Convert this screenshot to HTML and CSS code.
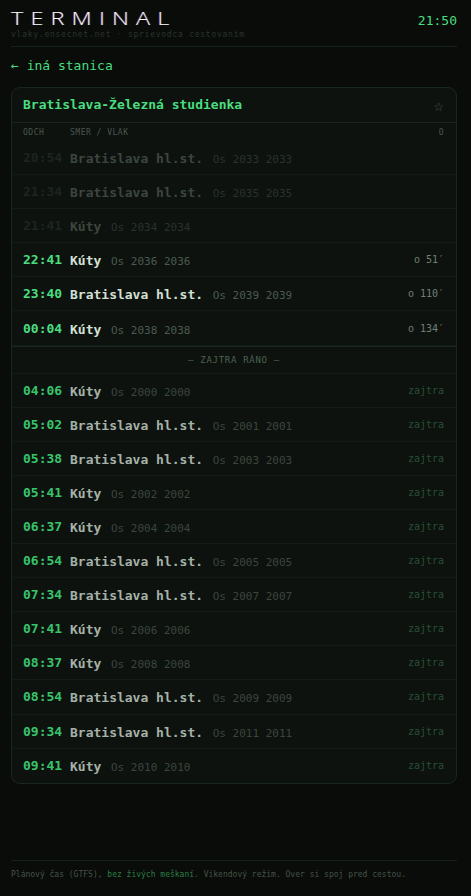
FILE: index.html
```html
<!DOCTYPE html>
<html lang="sk">
<head>
<meta charset="utf-8">
<title>Terminal – Bratislava-Železná studienka</title>
<link rel="stylesheet" href="styles.css">
</head>
<body>
<div class="page">
  <header class="top">
    <div class="brand">
      <div class="logo">TERMINAL</div>
      <div class="tag">vlaky.ensecnet.net · sprievodca cestovaním</div>
    </div>
    <div class="clock">21:50</div>
  </header>

  <a class="back" href="#">← iná stanica</a>

  <section class="board">
    <div class="board-head">
      <h1 class="station">Bratislava-Železná studienka</h1>
      <span class="star">☆</span>
    </div>
    <div class="cols">
      <span>ODCH</span><span>SMER / VLAK</span><span class="c-right">O</span>
    </div>

    <div class="row past"><span class="time">20:54</span><span class="dir"><b class="dest">Bratislava hl.st.</b> <span class="train">Os 2033 2033</span></span><span class="eta"></span></div>
    <div class="row past"><span class="time">21:34</span><span class="dir"><b class="dest">Bratislava hl.st.</b> <span class="train">Os 2035 2035</span></span><span class="eta"></span></div>
    <div class="row past"><span class="time">21:41</span><span class="dir"><b class="dest">Kúty</b> <span class="train">Os 2034 2034</span></span><span class="eta"></span></div>
    <div class="row now"><span class="time">22:41</span><span class="dir"><b class="dest">Kúty</b> <span class="train">Os 2036 2036</span></span><span class="eta">o 51′</span></div>
    <div class="row now"><span class="time">23:40</span><span class="dir"><b class="dest">Bratislava hl.st.</b> <span class="train">Os 2039 2039</span></span><span class="eta">o 110′</span></div>
    <div class="row now"><span class="time">00:04</span><span class="dir"><b class="dest">Kúty</b> <span class="train">Os 2038 2038</span></span><span class="eta">o 134′</span></div>

    <div class="sep">— ZAJTRA RÁNO —</div>

    <div class="row next"><span class="time">04:06</span><span class="dir"><b class="dest">Kúty</b> <span class="train">Os 2000 2000</span></span><span class="eta">zajtra</span></div>
    <div class="row next"><span class="time">05:02</span><span class="dir"><b class="dest">Bratislava hl.st.</b> <span class="train">Os 2001 2001</span></span><span class="eta">zajtra</span></div>
    <div class="row next"><span class="time">05:38</span><span class="dir"><b class="dest">Bratislava hl.st.</b> <span class="train">Os 2003 2003</span></span><span class="eta">zajtra</span></div>
    <div class="row next"><span class="time">05:41</span><span class="dir"><b class="dest">Kúty</b> <span class="train">Os 2002 2002</span></span><span class="eta">zajtra</span></div>
    <div class="row next"><span class="time">06:37</span><span class="dir"><b class="dest">Kúty</b> <span class="train">Os 2004 2004</span></span><span class="eta">zajtra</span></div>
    <div class="row next"><span class="time">06:54</span><span class="dir"><b class="dest">Bratislava hl.st.</b> <span class="train">Os 2005 2005</span></span><span class="eta">zajtra</span></div>
    <div class="row next"><span class="time">07:34</span><span class="dir"><b class="dest">Bratislava hl.st.</b> <span class="train">Os 2007 2007</span></span><span class="eta">zajtra</span></div>
    <div class="row next"><span class="time">07:41</span><span class="dir"><b class="dest">Kúty</b> <span class="train">Os 2006 2006</span></span><span class="eta">zajtra</span></div>
    <div class="row next"><span class="time">08:37</span><span class="dir"><b class="dest">Kúty</b> <span class="train">Os 2008 2008</span></span><span class="eta">zajtra</span></div>
    <div class="row next"><span class="time">08:54</span><span class="dir"><b class="dest">Bratislava hl.st.</b> <span class="train">Os 2009 2009</span></span><span class="eta">zajtra</span></div>
    <div class="row next"><span class="time">09:34</span><span class="dir"><b class="dest">Bratislava hl.st.</b> <span class="train">Os 2011 2011</span></span><span class="eta">zajtra</span></div>
    <div class="row next"><span class="time">09:41</span><span class="dir"><b class="dest">Kúty</b> <span class="train">Os 2010 2010</span></span><span class="eta">zajtra</span></div>
  </section>

  <footer class="foot">
    Plánový čas (GTFS), <span class="hl">bez živých meškaní</span>. Víkendový režim. Over si spoj pred cestou.
  </footer>
</div>
</body>
</html>
```

FILE: styles.css
```css
* { box-sizing: border-box; }

html, body {
  margin: 0;
  background: #090c09;
}

body {
  font-family: "DejaVu Sans Mono", "Liberation Mono", monospace;
  color: #c9d6cc;
}

.page {
  min-height: 100vh;
  display: flex;
  flex-direction: column;
  padding: 0 14px 0 11px;
}

/* header */
.top {
  display: flex;
  justify-content: space-between;
  align-items: flex-start;
  padding: 8px 0 5px;
  border-bottom: 1px solid #16211a;
}

.logo {
  font-family: "Open Sans", "DejaVu Sans", sans-serif;
  font-weight: 300;
  font-size: 18px;
  line-height: 20px;
  letter-spacing: 5.5px;
  color: #f6f8f6;
  transform: scaleX(1.3);
  transform-origin: left center;
  text-shadow: -0.8px 0 rgba(255, 40, 90, 0.35), 0.8px 0 rgba(60, 150, 255, 0.35);
}

.tag {
  margin-top: 1px;
  font-size: 8px;
  line-height: 12px;
  letter-spacing: 0.75px;
  color: #29342c;
}

.clock {
  margin-top: 5px;
  font-size: 13px;
  line-height: 16px;
  color: #4ade80;
}

.back {
  display: block;
  margin-top: 11px;
  font-size: 13px;
  line-height: 16px;
  color: #4ade80;
  text-decoration: none;
}

/* departures board */
.board {
  margin-top: 13px;
  border: 1px solid #1a271e;
  border-radius: 9px;
  background: #0d120e;
  overflow: hidden;
}

.board-head {
  display: flex;
  justify-content: space-between;
  align-items: center;
  padding: 9px 12px 9px 11px;
  border-bottom: 1px solid #18241b;
}

.station {
  margin: 0;
  font-size: 13px;
  line-height: 16px;
  font-weight: bold;
  color: #4ade80;
}

.star {
  font-family: "DejaVu Sans", sans-serif;
  font-size: 12px;
  line-height: 16px;
  color: #4c5a50;
  transform: translateY(2px);
}

.cols {
  display: grid;
  grid-template-columns: 47px 1fr auto;
  align-items: center;
  height: 18px;
  padding: 0 12px 0 11px;
  font-size: 8px;
  letter-spacing: 0.5px;
  color: #4a574e;
}

.row {
  display: grid;
  grid-template-columns: 47px 1fr auto;
  align-items: center;
  height: 34.1px;
  padding: 0 12px 0 11px;
  border-bottom: 1px solid #131b15;
  white-space: nowrap;
}

.row:last-child { border-bottom: 0; }

.time {
  font-size: 13px;
  font-weight: bold;
}

.dest {
  font-size: 13px;
  font-weight: bold;
}

.train {
  font-size: 11px;
}

.eta {
  font-size: 10px;
  text-align: right;
}

.past .time { color: #1c251f; }
.past .dest { color: #3c463f; }
.past .train { color: #29322c; }

.now .time { color: #4ade80; }
.now .dest { color: #d3e0d6; }
.now .train { color: #4b5a50; }
.now .eta { color: #6f8075; }

.next .time { color: #38c46c; }
.next .dest { color: #a6b2a9; }
.next .train { color: #3b463e; }
.next .eta { color: #284f35; }

.sep {
  height: 28px;
  display: flex;
  align-items: center;
  justify-content: center;
  border-top: 1px solid #1a271e;
  border-bottom: 1px solid #131b15;
  font-size: 9px;
  letter-spacing: 0.7px;
  color: #4d6153;
}

/* footer note */
.foot {
  margin-top: auto;
  padding: 8px 0 15px;
  border-top: 1px solid #16211a;
  font-size: 8px;
  line-height: 12px;
  color: #46534a;
}

.foot .hl { color: #2c7d47; }
```
